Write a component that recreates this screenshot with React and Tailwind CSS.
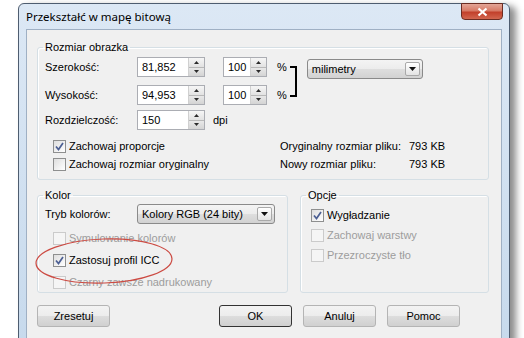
import React from 'react';

const Spin = () => (
  <div className="flex flex-col w-[16px] h-full border-l border-[#d0d0d0]">
    <div className="flex-1 flex items-center justify-center bg-gradient-to-b from-[#f6f6f6] to-[#e2e2e2] border-b border-[#b8b8b8]">
      <svg width="5" height="3" viewBox="0 0 5 3"><path d="M2.5 0L5 3H0z" fill="#2b2b2b" /></svg>
    </div>
    <div className="flex-1 flex items-center justify-center bg-gradient-to-b from-[#e8e8e8] to-[#d4d4d4]">
      <svg width="5" height="3" viewBox="0 0 5 3"><path d="M0 0H5L2.5 3z" fill="#2b2b2b" /></svg>
    </div>
  </div>
);

const NumField = ({ value, className }) => (
  <div className={`flex h-[20px] border border-[#abadb3] bg-white ${className}`}>
    <div className="flex-1 flex items-center pl-[4px]">{value}</div>
    <Spin />
  </div>
);

const Arrow = () => (
  <div className="w-[15px] h-[14px] border border-[#a9a9a9] rounded-[2px] bg-gradient-to-b from-white to-[#e4e4e4] flex items-center justify-center">
    <svg width="7" height="4" viewBox="0 0 7 4"><path d="M0 0H7L3.5 4z" fill="#111" /></svg>
  </div>
);

const Combo = ({ text, className }) => (
  <div className={`flex items-center h-[20px] border border-[#8a8a8a] rounded-[3px] bg-[linear-gradient(to_bottom,#f4f4f4,#ececec_50%,#dedede_50%,#d2d2d2)] pl-[4px] pr-[2px] ${className}`}>
    <span className="flex-1">{text}</span>
    <Arrow />
  </div>
);

const Check = ({ checked, disabled, label }) => (
  <div className="flex items-center h-full">
    <div
      className={`w-[13px] h-[13px] border flex items-center justify-center ${
        disabled ? 'border-[#cbcbcb] bg-[#f5f5f5]' : 'border-[#8e8f8f] bg-gradient-to-br from-[#dedede] to-white'
      }`}
    >
      {checked && (
        <svg width="9" height="9" viewBox="0 0 9 9">
          <path d="M1 4.5L3.5 7.5L8 1" fill="none" stroke="#4c5f93" strokeWidth="1.7" />
        </svg>
      )}
    </div>
    <span className={`ml-[3px] ${disabled ? 'text-[#9d9d9d]' : 'text-black'}`}>{label}</span>
  </div>
);

const Btn = ({ label, isDefault, className = '' }) => (
  <div
    className={`w-[73px] h-[22px] border rounded-[3px] flex items-center justify-center bg-[linear-gradient(to_bottom,#f3f3f3,#ececec_50%,#dddddd_50%,#d0d0d0)] ${
      isDefault ? 'border-[#333333]' : 'border-[#b4b4b4]'
    } ${className}`}
  >
    {label}
  </div>
);

const Group = ({ label, className, children }) => (
  <fieldset className={`border border-[#d5dfe5] rounded-[3px] shadow-[inset_1px_1px_0_#ffffff] ${className}`}>
    <legend className="ml-[5px] px-[2px] leading-[13px]">{label}</legend>
    {children}
  </fieldset>
);

export default function App() {
  return (
    <div className="relative w-[524px] h-[338px] bg-white overflow-hidden font-['Liberation_Sans',_sans-serif] text-[11px] text-black">
      {/* Window */}
      <div className="ml-[18px] mt-[3px] w-[492px] h-[360px] rounded-t-[6px] border border-[#4e5d70] bg-gradient-to-b from-[#dce8f5] to-[#c6d9ec] shadow-[6px_3px_7px_rgba(0,0,0,0.45)]">
        {/* Title bar */}
        <div className="flex justify-between h-[25px] pl-[7px] pr-[6px]">
          <div className="self-center font-['Noto_Sans',_sans-serif] text-[11.5px] text-black">Przekształć w mapę bitową</div>
          <div className="w-[42px] h-[17px] -mt-px rounded-b-[4px] border border-[#6b2c22] bg-[linear-gradient(to_bottom,#e3a596,#d77a66_45%,#c2402b_55%,#d2664f)] flex items-center justify-center">
            <svg width="11" height="10" viewBox="0 0 11 10">
              <path d="M1.5 1.5L9.5 8.5M9.5 1.5L1.5 8.5" stroke="#ffffff" strokeWidth="2.2" />
            </svg>
          </div>
        </div>

        {/* Client */}
        <div className="mx-[7px] h-[340px] border border-[#9fb0c4] bg-[#f0f0f0] pl-[10px] pt-[11px]">
          <Group label="Rozmiar obrazka" className="w-[452px] h-[139px]">
            <div className="px-[7px] pt-[3px]">
              <div className="flex">
                <div className="flex flex-col">
                  <div className="flex items-center h-[20px]">
                    <span className="w-[92px]">Szerokość:</span>
                    <NumField value="81,852" className="w-[68px]" />
                    <NumField value="100" className="w-[44px] ml-[18px]" />
                    <span className="ml-[10px]">%</span>
                  </div>
                  <div className="flex items-center h-[20px] mt-[8px]">
                    <span className="w-[92px]">Wysokość:</span>
                    <NumField value="94,953" className="w-[68px]" />
                    <NumField value="100" className="w-[44px] ml-[18px]" />
                    <span className="ml-[10px]">%</span>
                  </div>
                </div>
                <div className="ml-[3px] mt-[9px] w-[7px] h-[31px] border-t-2 border-r-2 border-b-2 border-black" />
                <Combo text="milimetry" className="ml-[10px] mt-[2px] w-[116px]" />
              </div>
              <div className="flex items-center h-[20px] mt-[5px]">
                <span className="w-[92px]">Rozdzielczość:</span>
                <NumField value="150" className="w-[68px]" />
                <span className="ml-[8px]">dpi</span>
              </div>
              <div className="flex mt-[7px]">
                <div className="flex flex-col w-[235px] pl-[8px]">
                  <div className="h-[18px]"><Check checked label="Zachowaj proporcje" /></div>
                  <div className="h-[18px]"><Check label="Zachowaj rozmiar oryginalny" /></div>
                </div>
                <div className="flex flex-col">
                  <div className="flex items-center h-[18px]">
                    <span className="w-[129px]">Oryginalny rozmiar pliku:</span>
                    <span>793 KB</span>
                  </div>
                  <div className="flex items-center h-[18px]">
                    <span className="w-[129px]">Nowy rozmiar pliku:</span>
                    <span>793 KB</span>
                  </div>
                </div>
              </div>
            </div>
          </Group>

          <div className="flex mt-[9px]">
            <Group label="Kolor" className="w-[251px] h-[104px]">
              <div className="px-[7px] pt-[2px]">
                <div className="flex items-center h-[20px]">
                  <span className="w-[92px]">Tryb kolorów:</span>
                  <Combo text="Kolory RGB (24 bity)" className="w-[138px]" />
                </div>
                <div className="pl-[8px] mt-[3px]">
                  <div className="h-[22px]"><Check disabled label="Symulowanie kolorów" /></div>
                  <div className="h-[23px]"><Check checked label="Zastosuj profil ICC" /></div>
                  <div className="h-[20px]"><Check disabled label="Czarny zawsze nadrukowany" /></div>
                </div>
              </div>
            </Group>
            <Group label="Opcje" className="w-[189px] h-[104px] ml-[12px]">
              <div className="pl-[10px] pt-[3px]">
                <div className="h-[20px]"><Check checked label="Wygładzanie" /></div>
                <div className="h-[20px]"><Check disabled label="Zachowaj warstwy" /></div>
                <div className="h-[20px]"><Check disabled label="Przezroczyste tło" /></div>
              </div>
            </Group>
          </div>

          <div className="flex mt-[12px]">
            <Btn label="Zresetuj" />
            <Btn label="OK" isDefault className="ml-[109px]" />
            <Btn label="Anuluj" className="ml-[11px]" />
            <Btn label="Pomoc" className="ml-[11px]" />
          </div>
        </div>
      </div>

      {/* red annotation around ICC option */}
      <svg className="absolute left-[32px] top-[236px]" width="146" height="52" viewBox="0 0 146 52">
        <ellipse cx="72" cy="25" rx="68" ry="22" fill="none" stroke="#cc4a42" strokeWidth="1.2" transform="rotate(-2 72 25)" />
      </svg>
    </div>
  );
}
